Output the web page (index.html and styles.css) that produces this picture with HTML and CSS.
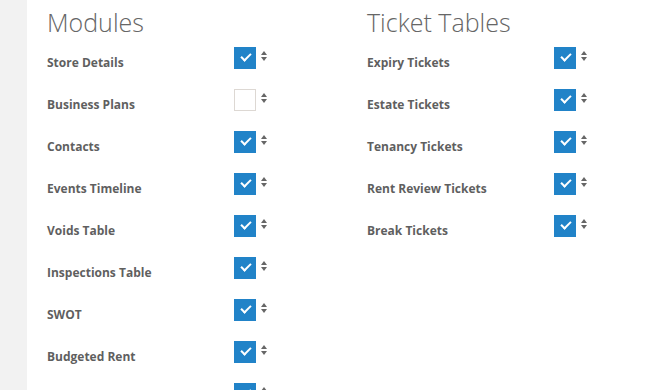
FILE: index.html
```html
<!DOCTYPE html>
<html lang="en">
  <head>
    <meta charset="UTF-8" />
    <title>Settings</title>
    <link rel="stylesheet" href="styles.css">
  </head>
  <body>
    <div class="page">
      <div class="sidebar"></div>
      <div class="content">
        <!-- Modules -->
        <div class="section">
          <h2>Modules</h2>
          <div class="row"><span class="label">Store Details</span><span class="check on"></span><span class="sort"></span></div>
          <div class="row"><span class="label">Business Plans</span><span class="check"></span><span class="sort"></span></div>
          <div class="row"><span class="label">Contacts</span><span class="check on"></span><span class="sort"></span></div>
          <div class="row"><span class="label">Events Timeline</span><span class="check on"></span><span class="sort"></span></div>
          <div class="row"><span class="label">Voids Table</span><span class="check on"></span><span class="sort"></span></div>
          <div class="row"><span class="label">Inspections Table</span><span class="check on"></span><span class="sort"></span></div>
          <div class="row"><span class="label">SWOT</span><span class="check on"></span><span class="sort"></span></div>
          <div class="row"><span class="label">Budgeted Rent</span><span class="check on"></span><span class="sort"></span></div>
          <div class="row"><span class="label"></span><span class="check on"></span><span class="sort"></span></div>
        </div>

        <!-- Ticket tables -->
        <div class="section">
          <h2>Ticket Tables</h2>
          <div class="row"><span class="label">Expiry Tickets</span><span class="check on"></span><span class="sort"></span></div>
          <div class="row"><span class="label">Estate Tickets</span><span class="check on"></span><span class="sort"></span></div>
          <div class="row"><span class="label">Tenancy Tickets</span><span class="check on"></span><span class="sort"></span></div>
          <div class="row"><span class="label">Rent Review Tickets</span><span class="check on"></span><span class="sort"></span></div>
          <div class="row"><span class="label">Break Tickets</span><span class="check on"></span><span class="sort"></span></div>
        </div>
      </div>
    </div>
  </body>
</html>
```

FILE: styles.css
```css
body {
  margin: 0;
  padding: 0;
  font-family: "Open Sans", Arial, sans-serif;
  background-color: #fff;
  color: #666;
  overflow: hidden;
}

.page {
  display: flex;
  height: 390px;
  overflow: hidden;
}
.sidebar {
  width: 27px;
  flex-shrink: 0;
  background-color: #f2f2f2;
}
.content {
  flex: 1;
  display: grid;
  grid-template-columns: 320px 1fr;
  padding-left: 20px;
}

.section h2 {
  margin: 8px 0 11px 0;
  height: 28px;
  line-height: 28px;
  font-size: 25px;
  font-weight: 300;
  color: #666;
}

.row {
  display: flex;
  align-items: flex-start;
  height: 42px;
}
.label {
  width: 187px;
  padding-top: 8px;
  font-size: 12px;
  line-height: 16px;
  font-weight: 700;
  color: #5f5f5f;
}

.check {
  width: 20px;
  height: 20px;
  border: 1px solid #ddd8d3;
  background: #fff;
  position: relative;
}
.check.on {
  background: #2183c8;
  border-color: #2183c8;
}
.check.on::after {
  content: "";
  position: absolute;
  left: 6px;
  top: 5px;
  width: 8px;
  height: 4px;
  border-left: 2px solid #fff;
  border-bottom: 2px solid #fff;
  transform: rotate(-45deg);
}

/* up / down sort arrows */
.sort {
  position: relative;
  width: 7px;
  height: 10px;
  margin: 4px 0 0 5px;
}
.sort::before,
.sort::after {
  content: "";
  position: absolute;
  left: 0;
  border-left: 3.5px solid transparent;
  border-right: 3.5px solid transparent;
}
.sort::before {
  top: 0;
  border-bottom: 4px solid #666;
}
.sort::after {
  bottom: 0;
  border-top: 4px solid #666;
}
```
